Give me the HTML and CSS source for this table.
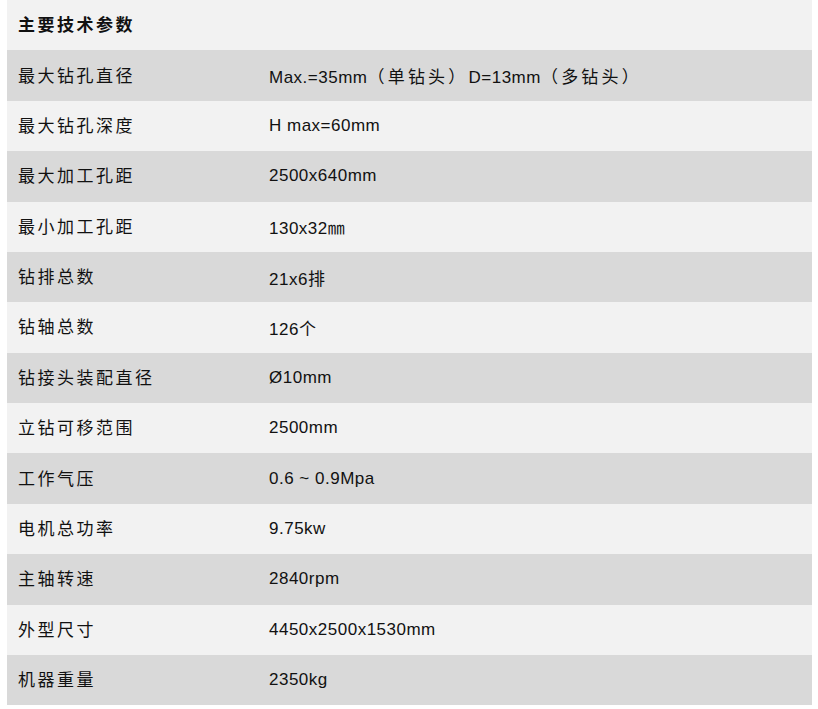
FILE: index.html
```html
<!DOCTYPE html>
<html lang="zh">
<head>
<meta charset="utf-8">
<title>主要技术参数</title>
<link rel="stylesheet" href="styles.css">
</head>
<body>
<div class="spec">
  <div class="row head"><div class="k">主要技术参数</div><div class="v"></div></div>
  <div class="row dark"><div class="k">最大钻孔直径</div><div class="v">Max.=35mm<span class="cj">（单钻头）</span>D=13mm<span class="cj">（多钻头）</span></div></div>
  <div class="row light"><div class="k">最大钻孔深度</div><div class="v">H max=60mm</div></div>
  <div class="row dark"><div class="k">最大加工孔距</div><div class="v">2500x640mm</div></div>
  <div class="row light"><div class="k">最小加工孔距</div><div class="v">130x32㎜</div></div>
  <div class="row dark"><div class="k">钻排总数</div><div class="v">21x6<span class="cj">排</span></div></div>
  <div class="row light"><div class="k">钻轴总数</div><div class="v">126<span class="cj">个</span></div></div>
  <div class="row dark"><div class="k">钻接头装配直径</div><div class="v">Ø10mm</div></div>
  <div class="row light"><div class="k">立钻可移范围</div><div class="v">2500mm</div></div>
  <div class="row dark"><div class="k">工作气压</div><div class="v">0.6 ~ 0.9Mpa</div></div>
  <div class="row light"><div class="k">电机总功率</div><div class="v">9.75kw</div></div>
  <div class="row dark"><div class="k">主轴转速</div><div class="v">2840rpm</div></div>
  <div class="row light"><div class="k">外型尺寸</div><div class="v">4450x2500x1530mm</div></div>
  <div class="row dark"><div class="k">机器重量</div><div class="v">2350kg</div></div>
</div>
</body>
</html>
```
FILE: styles.css
```css
html, body {
  margin: 0;
  padding: 0;
  background: #ffffff;
}
body {
  font-family: "Liberation Sans", Arial, "Noto Sans CJK SC", sans-serif;
  font-size: 17px;
  color: #111111;
}
.spec {
  width: 805px;
  margin-left: 7px;
  display: flex;
  flex-direction: column;
}
.row {
  height: 50.38px;
  display: flex;
  align-items: center;
}
.head, .light { background: #f2f2f2; }
.dark { background: #d9d9d9; }
.k {
  width: 251px;
  padding-left: 11px;
  padding-bottom: 3px;
  letter-spacing: 2.5px;
  font-family: "Noto Sans CJK SC", sans-serif;
}
.head .k { font-weight: bold; }
.v {
  flex: 1;
  letter-spacing: 0.5px;
}
.cj {
  font-family: "Noto Sans CJK SC", sans-serif;
  letter-spacing: 3.2px;
}
```
